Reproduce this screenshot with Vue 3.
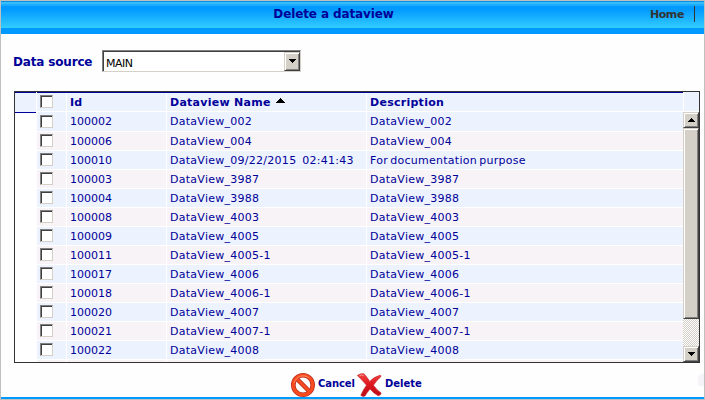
<script setup>
import { ref } from 'vue'

const rows = ref([
  ['100002', 'DataView_002'],
  ['100006', 'DataView_004'],
  ['100010', 'DataView_09/22/2015 02:41:43', 'For documentation purpose'],
  ['100003', 'DataView_3987'],
  ['100004', 'DataView_3988'],
  ['100008', 'DataView_4003'],
  ['100009', 'DataView_4005'],
  ['100011', 'DataView_4005-1'],
  ['100017', 'DataView_4006'],
  ['100018', 'DataView_4006-1'],
  ['100020', 'DataView_4007'],
  ['100021', 'DataView_4007-1'],
  ['100022', 'DataView_4008'],
].map(([id, name, description]) => ({ id, name, description: description ?? name })))
</script>

<template>
  <div class="page">
    <header class="bar">
      <span></span>
      <h1>Delete a dataview</h1>
      <nav><a>Home</a></nav>
    </header>

    <div class="source">
      <label>Data source</label>
      <div class="select">
        <span class="value">MAIN</span>
        <span class="btn drop">
          <svg width="7" height="4" shape-rendering="crispEdges"><path d="M0 0h7v1H6v1H5v1H4v1H3V3H2V2H1V1H0z" /></svg>
        </span>
      </div>
    </div>

    <div class="frame">
      <div class="gutter"></div>
      <div class="grid">
        <div class="row head">
          <div class="cell check"><i class="box"></i></div>
          <div class="cell"><span>Id</span></div>
          <div class="cell">
            <span>Dataview Name</span>
            <svg class="sort" width="9" height="5" shape-rendering="crispEdges"><path d="M4 0h1v1h1v1h1v1h1v1h1v1H0V4h1V3h1V2h1V1h1z" /></svg>
          </div>
          <div class="cell"><span>Description</span></div>
        </div>
        <div v-for="row in rows" :key="row.id" class="row">
          <div class="cell check"><i class="box"></i></div>
          <div class="cell id"><span>{{ row.id }}</span></div>
          <div class="cell name"><span>{{ row.name }}</span></div>
          <div class="cell desc"><span>{{ row.description }}</span></div>
        </div>
        <div class="row partial">
          <div class="cell"></div><div class="cell"></div><div class="cell"></div><div class="cell"></div>
        </div>
      </div>
      <div class="side">
        <div class="corner"></div>
        <div class="btn arrow">
          <svg width="7" height="4" shape-rendering="crispEdges"><path d="M3 0h1v1h1v1h1v1h1v1H0V3h1V2h1V1h1z" /></svg>
        </div>
        <div class="btn thumb"></div>
        <div class="track"></div>
        <div class="btn arrow">
          <svg width="7" height="4" shape-rendering="crispEdges"><path d="M0 0h7v1H6v1H5v1H4v1H3V3H2V2H1V1H0z" /></svg>
        </div>
      </div>
    </div>

    <footer class="actions">
      <svg width="26" height="26" viewBox="0 0 26 26">
        <circle cx="13" cy="13" r="9.7" fill="none" stroke="#b83020" stroke-width="4.6" />
        <path d="M6.4 6.4l13.2 13.2" stroke="#b83020" stroke-width="4.4" />
        <circle cx="13" cy="13" r="9.7" fill="none" stroke="#fa4b20" stroke-width="3" />
        <path d="M6 6l14 14" stroke="#fa4b20" stroke-width="2.8" />
        <path d="M4.2 11a9.3 9.3 0 0 1 15-5" fill="none" stroke="#ff8a60" stroke-width="1" />
      </svg>
      <span class="cancel">Cancel</span>
      <svg width="26" height="26" viewBox="0 0 26 26">
        <defs>
          <linearGradient id="cross" x1="0" y1="0" x2="0" y2="1">
            <stop offset="0" stop-color="#f04844" /><stop offset=".45" stop-color="#e01820" /><stop offset="1" stop-color="#b80c18" />
          </linearGradient>
        </defs>
        <path d="M.3 3.6Q3.5 1 7 1.8Q10 5 12.8 9.4Q17 4.8 23 3.2Q24.3 3.5 23.8 4.8Q19.5 8.5 16.4 13.2Q19.7 18 24.2 21Q23.8 23.4 21.2 23.8Q16.5 21.2 13 17Q10 20.5 8 24Q5.5 25.2 3.8 23.3Q6 18 9.5 13.2Q5.2 8 .3 3.6z" fill="url(#cross)" stroke="#c02028" stroke-width=".6" />
        <path d="M2.6 3.6q2.5-1.3 4-.1" fill="none" stroke="#f69a90" stroke-width="1" />
      </svg>
      <span class="delete">Delete</span>
      <i class="blob"></i>
    </footer>
  </div>
</template>

<style>
body { margin: 0; background: #fff; }
</style>

<style scoped>
* { box-sizing: border-box; }
.page {
  width: 705px; height: 400px; overflow: hidden;
  display: flex; flex-direction: column;
  border: 1px solid #c0c0c0;
  background: #fefefe; color: #000099;
  font: 11px/14px "DejaVu Sans", Verdana, sans-serif;
  white-space: nowrap;
}
.bar {
  flex: none; height: 33px; padding-right: 9px;
  display: grid; grid-template-columns: 1fr 1fr 1fr; align-items: start;
  background: linear-gradient(#0b8fe0 0 1px, #35bdff 1px 3px, #1cacff 3px 5px, #0099ff 5px 8px, #33ccff 27px, #0099ff 27px 33px);
}
.bar h1 { margin: 6px 0 0 41px; font-size: 12px; line-height: 15px; letter-spacing: -.12px; }
.bar nav {
  margin-top: 5px; height: 16px; padding-right: 10px; justify-self: end;
  border-right: 1px solid #333; color: #333; font-weight: bold; line-height: 17px; letter-spacing: -.4px;
}
.source { flex: none; display: flex; padding: 16px 0 0 12px; height: 56px; align-items: flex-start; }
.source label { width: 89px; font-weight: bold; font-size: 12px; line-height: 25px; letter-spacing: -.17px; }
.select {
  width: 199px; height: 22px; display: flex; justify-content: space-between;
  border: 1px solid; border-color: #808080 #d4d0c8 #d4d0c8 #808080;
  box-shadow: inset 1px 1px #404040; background: #fff; padding: 1px 0 1px 1px;
}
.value { color: #000; padding-left: 2px; line-height: 24px; letter-spacing: -.5px; }
.btn {
  background: #d4d0c8; border: 1px solid; border-color: #d4d0c8 #404040 #404040 #d4d0c8;
  box-shadow: inset 1px 1px #fff, inset -1px -1px #808080;
  display: flex; align-items: center; justify-content: center;
}
.drop { width: 16px; height: 19px; }
.drop svg { margin-bottom: 1px; }
.frame {
  flex: none; display: grid; grid-template-columns: 22px 646px 16px;
  margin: 1px 0 0 13px; width: 686px; height: 272px; border: 1px solid #333; background: #fff;
}
.gutter { width: 21px; height: 21px; background: #edf2ff; border: solid #000099; border-width: 1px 0; }
.grid { overflow: hidden; height: 270px; }
.row {
  height: 19px; border-bottom: 1px solid #fff;
  display: grid; grid-template-columns: 29px 99px 199px 316px; column-gap: 1px;
}
.head { height: 20px; font-weight: bold; letter-spacing: .27px; background: linear-gradient(#000099 1px, transparent 1px); }
.head .cell { margin-top: 1px; }
.head + .row { height: 20px; }
.cell { display: flex; align-items: center; padding: 1px 0 0 3px; background: #edf2ff; min-width: 0; overflow: hidden; }
.name, .desc { letter-spacing: .27px; }
.name { word-spacing: 2px; }
.desc { word-spacing: -1.6px; }
.row:nth-child(odd) .cell { background: #f7f3f7; }
.row.head .cell { background: #edf2ff; padding-top: 2px; }
.box {
  width: 13px; height: 13px; background: #fff;
  border: 1px solid; border-color: #808080 #d4d0c8 #d4d0c8 #808080; box-shadow: inset 1px 1px #404040;
}
.check { align-items: flex-start; padding: 2px 0 0 3px; }
.head + .row .check { padding-top: 3px; }
.sort { margin: -6px 0 0 5px; }
.side { display: flex; flex-direction: column; height: 270px; }
.corner { height: 19px; margin: 0 0 1px 1px; background: #edf2ff; flex: none; }
.arrow { height: 16px; flex: none; }
.thumb { height: 191px; flex: none; }
.track { flex: 1; background: repeating-conic-gradient(#d4d0c8 0 25%, #fff 0 50%) 0 0 / 2px 2px; }
.actions {
  flex: 1; margin-top: 1px; display: flex; align-items: flex-start; padding: 8px 0 0 289px;
  border-bottom: 2px solid #0099ff; font-weight: bold; font-size: 10px; position: relative; overflow: hidden;
}
.actions svg { flex: none; }
.actions span { line-height: 24px; margin-left: 2px; }
.actions .cancel { width: 39px; letter-spacing: -.1px; }
.blob { position: absolute; right: -6px; top: 9px; width: 12px; height: 13px; border-radius: 6px 0 0 1px; background: #f5f3f7; }
</style>
